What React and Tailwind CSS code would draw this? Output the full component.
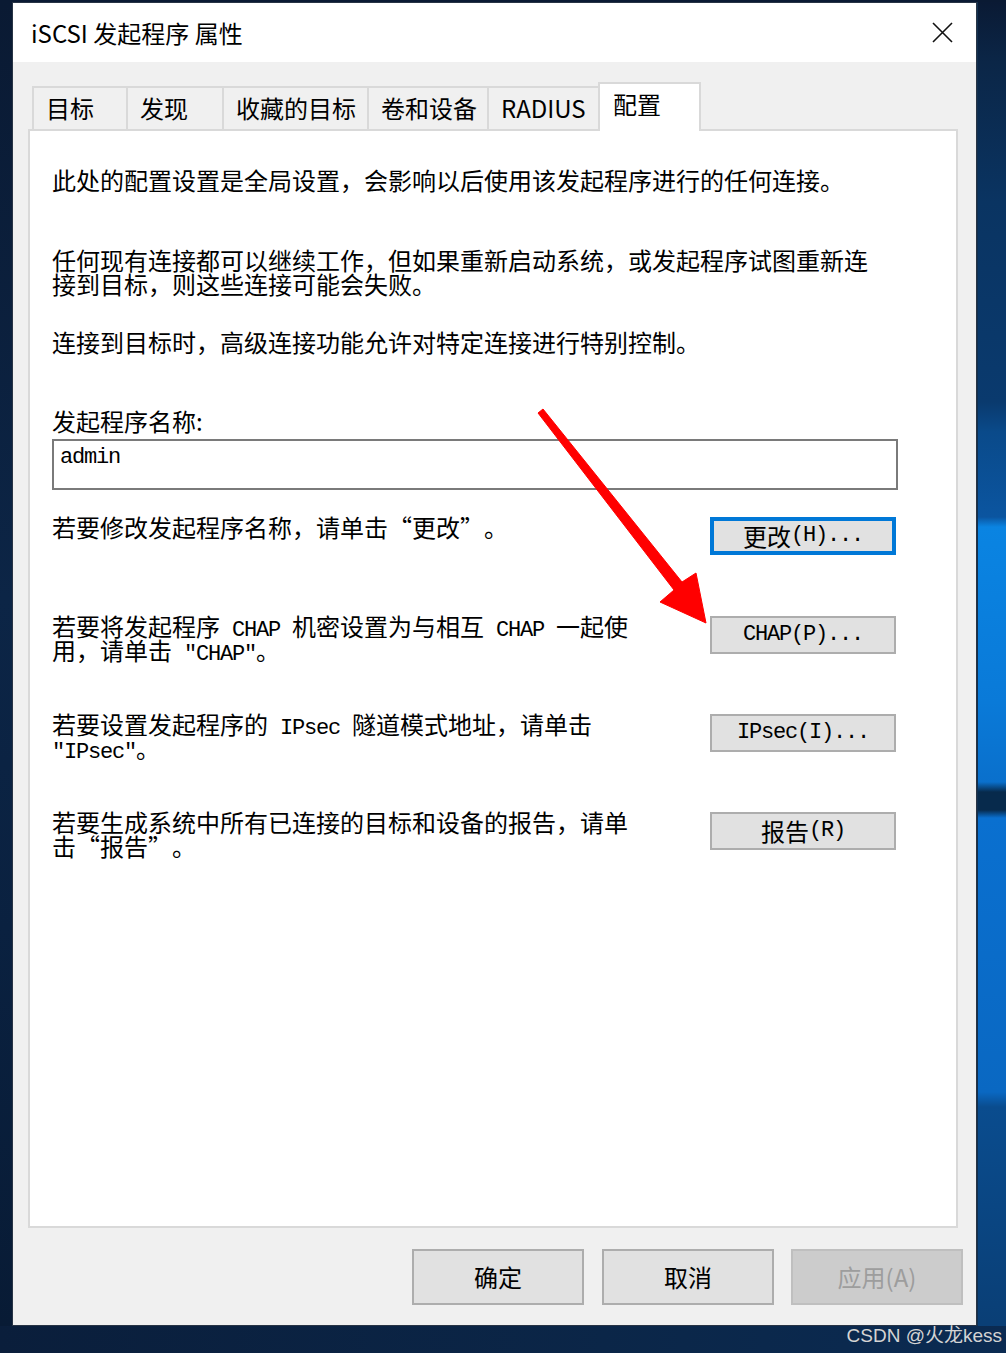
const mono = "font-['Liberation_Mono',monospace] text-[22px] tracking-[-1.2px]";

function M({ children }) {
  return <span className={mono}>{children}</span>;
}

// full-width curly quotes, as the bitmap font draws them
function QL() {
  return <span className="inline-block w-[24px] text-right">“</span>;
}
function QR() {
  return <span className="inline-block w-[24px] text-left">”</span>;
}

function Lines({ className = "", lines }) {
  return (
    <div className={className}>
      {lines.map((line, i) => (
        <div key={i} className="h-[24px] text-[24px] leading-[24px] whitespace-nowrap">
          {line}
        </div>
      ))}
    </div>
  );
}

function Tab({ className, children }) {
  return (
    <div
      className={`h-[43px] border-t-2 border-l-2 border-[#d9d9d9] bg-[#f0f0f0] pl-[12px] pt-[8px] text-[24px] leading-[24px] whitespace-nowrap ${className}`}
    >
      {children}
    </div>
  );
}

function SmallButton({ focused, children }) {
  return (
    <div
      className={
        focused
          ? "mt-[2px] mr-[2px] flex h-[38px] w-[186px] items-center justify-center border-4 border-[#0078d7] bg-[#e1e1e1] text-[24px] leading-[24px] whitespace-nowrap"
          : "mt-[2px] mr-[2px] flex h-[38px] w-[186px] items-center justify-center border-2 border-[#adadad] bg-[#e1e1e1] text-[24px] leading-[24px] whitespace-nowrap"
      }
    >
      {children}
    </div>
  );
}

function Row({ className, lines, button }) {
  return (
    <div className={`flex w-[846px] items-start justify-between ${className}`}>
      <Lines lines={lines} />
      {button}
    </div>
  );
}

export default function App() {
  return (
    <div className="relative h-[1353px] w-[1006px] overflow-hidden bg-[#0b1f3c] font-['Noto_Sans_CJK_SC',sans-serif] text-black">
      <div className="h-[2px] bg-[#0a1a33]" />
      <div className="flex h-[1324px]">
        <div className="w-[12px] bg-[linear-gradient(180deg,#0a1a33_0%,#0c2546_45%,#0a2140_70%,#081b35_100%)]" />

        {/* dialog */}
        <div className="flex w-[965px] flex-col border border-[#283445] bg-[#f0f0f0]">
          {/* title bar */}
          <div className="flex h-[59px] items-center justify-between bg-white pl-[18px] pr-[23px]">
            <span className="text-[24px] leading-[28px]">iSCSI 发起程序 属性</span>
            <svg width="21" height="21" viewBox="0 0 21 21">
              <path d="M1 1 L20 20 M20 1 L1 20" stroke="#111" strokeWidth="1.6" fill="none" />
            </svg>
          </div>

          {/* tabs */}
          <div className="relative z-10 flex items-end pl-[19px] pt-[20px]">
            <Tab className="w-[94px]">目标</Tab>
            <Tab className="w-[96px]">发现</Tab>
            <Tab className="w-[145px]">收藏的目标</Tab>
            <Tab className="w-[120px]">卷和设备</Tab>
            <Tab className="w-[111px]">RADIUS</Tab>
            <div className="-mb-[2px] h-[49px] w-[103px] border-x-2 border-t-2 border-[#d9d9d9] bg-white pl-[13px] pt-[8px] text-[24px] leading-[24px]">
              配置
            </div>
          </div>

          {/* panel */}
          <div className="ml-[15px] h-[1099px] w-[930px] border-2 border-[#d9d9d9] bg-white pl-[22px] pt-[37px]">
            <Lines lines={["此处的配置设置是全局设置，会影响以后使用该发起程序进行的任何连接。"]} />
            <Lines
              className="mt-[56px]"
              lines={[
                "任何现有连接都可以继续工作，但如果重新启动系统，或发起程序试图重新连",
                "接到目标，则这些连接可能会失败。",
              ]}
            />
            <Lines className="mt-[34px]" lines={["连接到目标时，高级连接功能允许对特定连接进行特别控制。"]} />
            <Lines className="mt-[55px]" lines={["发起程序名称:"]} />
            <div className="mt-[6px] h-[51px] w-[846px] border-2 border-[#7a7a7a] pl-[6px] pt-[5px]">
              <div className={`${mono} h-[24px] leading-[24px]`}>admin</div>
            </div>

            <Row
              className="mt-[25px]"
              lines={[
                <>
                  若要修改发起程序名称，请单击<QL />更改<QR />。
                </>,
              ]}
              button={
                <SmallButton focused>
                  更改<M>(H)...</M>
                </SmallButton>
              }
            />
            <Row
              className="mt-[59px]"
              lines={[
                <>
                  若要将发起程序<M> CHAP </M>机密设置为与相互<M> CHAP </M>一起使
                </>,
                <>
                  用，请单击<M> "CHAP"</M>。
                </>,
              ]}
              button={
                <SmallButton>
                  <M>CHAP(P)...</M>
                </SmallButton>
              }
            />
            <Row
              className="mt-[50px]"
              lines={[
                <>
                  若要设置发起程序的<M> IPsec </M>隧道模式地址，请单击
                </>,
                <>
                  <M>"IPsec"</M>。
                </>,
              ]}
              button={
                <SmallButton>
                  <M>IPsec(I)...</M>
                </SmallButton>
              }
            />
            <Row
              className="mt-[50px]"
              lines={[
                "若要生成系统中所有已连接的目标和设备的报告，请单",
                <>
                  击<QL />报告<QR />。
                </>,
              ]}
              button={
                <SmallButton>
                  报告<M>(R)</M>
                </SmallButton>
              }
            />
          </div>

          {/* dialog buttons */}
          <div className="mt-[21px] flex justify-end pr-[13px]">
            <div className="flex h-[56px] w-[172px] items-center justify-center border-2 border-[#adadad] bg-[#e1e1e1] text-[24px]">
              确定
            </div>
            <div className="ml-[18px] flex h-[56px] w-[172px] items-center justify-center border-2 border-[#adadad] bg-[#e1e1e1] text-[24px]">
              取消
            </div>
            <div className="ml-[17px] flex h-[56px] w-[172px] items-center justify-center border-2 border-[#bfbfbf] bg-[#cccccc] text-[24px] text-[#9d9d9d]">
              应用(A)
            </div>
          </div>
        </div>

        <div className="flex-1 border-l border-[#12304f] bg-[linear-gradient(180deg,#0a1a34_0px,#0b2647_60px,#0a3462_200px,#0a3a6e_400px,#0a4a8a_430px,#0b55a0_515px,#0a84e2_525px,#0a7ad8_700px,#0a70cc_780px,#072a4c_790px,#072a4c_808px,#0a70d0_816px,#0a68c2_1090px,#0a4c8e_1105px,#0a3f76_1320px)]" />
      </div>

      {/* bottom strip with watermark */}
      <div className="flex h-[27px] justify-end bg-[linear-gradient(90deg,#0a1e3b,#0b2648_60%,#0b2b52)] pr-[4px]">
        <span className="font-['Liberation_Sans','Noto_Sans_CJK_SC',sans-serif] text-[19px] leading-[20px] text-[#d4d4d4]">
          CSDN @火龙kess
        </span>
      </div>

      {/* red annotation arrow */}
      <svg className="pointer-events-none absolute left-0 top-0" width="1006" height="1353">
        <polygon
          points="538,413 543,409 682,582 696,573 706,623 660,602 674,590"
          fill="#ff0000"
          stroke="#ff0000"
          strokeWidth="1"
          strokeLinejoin="round"
        />
      </svg>
    </div>
  );
}
